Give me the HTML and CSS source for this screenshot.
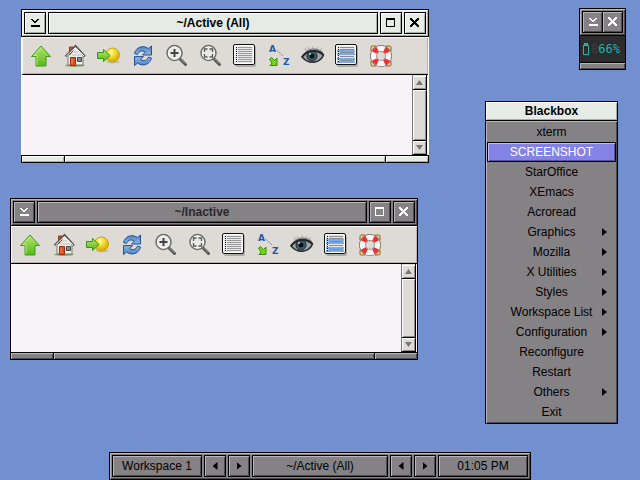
FILE: index.html
```html
<!DOCTYPE html>
<html lang="en">
<head>
<meta charset="utf-8">
<title>Blackbox</title>
<link rel="stylesheet" href="styles.css">
</head>
<body>
<svg class="sprites" aria-hidden="true">
  <defs>
    <linearGradient id="green" x2="0" y2="1"><stop stop-color="#b4e86a"/><stop offset="1" stop-color="#58b81c"/></linearGradient>
    <linearGradient id="blue" x2="0" y2="1"><stop stop-color="#4d83c4"/><stop offset="1" stop-color="#8fb5e2"/></linearGradient>
    <radialGradient id="gold" cx=".4" cy=".3" r=".7"><stop stop-color="#fffbb0"/><stop offset=".4" stop-color="#f5e030"/><stop offset="1" stop-color="#d3a80a"/></radialGradient>
    <symbol id="up" viewBox="0 0 24 24">
      <path d="M12 2 21.5 12.5H17V22H7V12.5H2.500Z" fill="url(#green)" stroke="#3f9c1c" stroke-linejoin="round"/>
      <path d="M12 4 5 11.500H8V21" fill="none" stroke="#d8f5a8" opacity=".7"/>
    </symbol>
    <symbol id="home" viewBox="0 0 24 24">
      <ellipse cx="12" cy="21.500" rx="10" ry="1.500" fill="#88a860"/>
      <path d="M5 12V21H20V11L12.500 3Z" fill="#eeeeec" stroke="#777"/>
      <path d="M6.500 3H10V7L6.500 11Z" fill="#d4582c" stroke="#95330e"/>
      <path d="M2.500 12.500 12.500 2 22 12.500" fill="none" stroke="#555753" stroke-width="2"/>
      <path d="M3.500 12 12.500 3.500 21 12" fill="none" stroke="#fff"/>
      <path d="M9 11H18M11 8H15" stroke="#bbb"/>
      <path d="M7.500 13.500H12.500V21.500H7.500Z" fill="#e0512b" stroke="#9d2b0c"/>
      <path d="M9 15V20" stroke="#f88a55"/>
      <path d="M14.500 13.500H18.500V17.500H14.500Z" fill="#888a85" stroke="#444"/>
    </symbol>
    <symbol id="go" viewBox="0 0 24 24">
      <ellipse cx="16" cy="18" rx="7" ry="1.500" fill="#aaa69d" opacity=".5"/>
      <circle cx="15.500" cy="11" r="7" fill="url(#gold)" stroke="#c9a20c"/>
      <path d="M.500 8.500H6.500V5.500L13 11.500 6.500 17.500V14.500H.500Z" fill="url(#green)" stroke="#3f8f18" stroke-linejoin="round"/>
    </symbol>
    <symbol id="reload" viewBox="0 0 24 24">
      <path id="swirl" d="M3.500 9.500C5 3.500 11.500 .500 17.500 4.500L20.500 2V11H11.500L14.500 8C11 6 8 7 6.500 10.500Z" fill="url(#blue)" stroke="#24508f" stroke-linejoin="round"/>
      <use href="#swirl" transform="rotate(180 12 11.800)"/>
    </symbol>
    <symbol id="lens" viewBox="0 0 24 24">
      <path d="M15 15 20.500 20.500" stroke="#555753" stroke-width="3" stroke-linecap="round"/>
      <path d="M15.500 15 20 19.500" stroke="#999" stroke-width="1"/>
      <circle cx="9.500" cy="9" r="7.500" fill="#e9e9e6" stroke="#6c6f69" stroke-width="1.500"/>
      <circle cx="9.500" cy="9" r="6" fill="none" stroke="#fafafa"/>
    </symbol>
    <symbol id="zoom-in" viewBox="0 0 24 24">
      <use href="#lens"/><path d="M9.500 5V13M5.500 9H13.500" stroke="#444" stroke-width="2"/>
    </symbol>
    <symbol id="zoom-fit" viewBox="0 0 24 24">
      <use href="#lens"/><path d="M5.500 8V5H8.500M10.500 5H13.500V8M13.500 10V13H10.500M8.500 13H5.500V10" fill="none" stroke="#555" stroke-width="1.300"/>
    </symbol>
    <symbol id="sheet" viewBox="0 0 24 24">
      <rect x="2" y="2" width="21" height="21" rx="2" fill="#77736c" opacity=".45"/>
      <rect x=".500" y=".500" width="21" height="20" rx="1.500" fill="#fff" stroke="#111"/>
      <rect x="2" y="2" width="18" height="17" fill="#e8e8e8"/>
    </symbol>
    <symbol id="list" viewBox="0 0 24 24">
      <use href="#sheet"/>
      <path d="M5 3.500H19M5 5.500H19M5 7.500H19M5 9.500H19M5 11.500H19M5 13.500H19M5 15.500H19M5 17.500H19" stroke="#999"/>
      <path d="M3.500 3V18.500" stroke="#111" stroke-dasharray="1 1"/>
    </symbol>
    <symbol id="details" viewBox="0 0 24 24">
      <use href="#sheet"/>
      <path d="M2 7H20M2 10H20M2 15H20M2 18H20" stroke="#78aae8" stroke-width="2"/>
      <path d="M5 3.500H19M5 5.500H19M5 8.500H19M5 12.500H19M5 16.500H19" stroke="#8b8b8b"/>
      <path d="M3.500 3V19" stroke="#111" stroke-dasharray="1 1"/>
    </symbol>
    <symbol id="sort" viewBox="0 0 24 24">
      <text x="2" y="8" class="sort-letter">A</text>
      <text x="16" y="21" class="sort-letter">Z</text>
      <path d="M10 6.500 16 12" stroke="#1e4f95" stroke-dasharray="1 1.500"/>
      <path d="M2.500 15 4.500 13.500 7.500 16.500 10 14V21.500H3L5 19Z" fill="#76d51b" stroke="#3c8c0b"/>
    </symbol>
    <symbol id="eye" viewBox="0 0 24 24">
      <path d="M4 8C8 3 17 3 22 8L21 11Q12 4 3 11Z" fill="#686868" opacity=".7"/>
      <path d="M5 7 4 4M8 5.500 7 3M12 4.500V2M16 5 17 3M19 6.500 21 4" stroke="#999" stroke-width=".700"/>
      <path d="M1 13C6 5 17 5 22.500 11C20 18 9 22 1 13Z" fill="#9ea2a0" stroke="#292d2f" stroke-width="1.500"/>
      <circle cx="11" cy="12" r="5" fill="#3b6170" stroke="#1b282d"/>
      <circle cx="11" cy="12" r="2.500" fill="#081014"/>
      <circle cx="9" cy="10" r="1" fill="#c4dce4"/>
      <path d="M1 13C6 6 16 5 22.500 11" fill="none" stroke="#22282b" stroke-width="2"/>
    </symbol>
    <symbol id="help" viewBox="0 0 24 24">
      <path d="M2 7V4Q2 2 4 2H7M17 2H20Q22 2 22 4V7M22 17V20Q22 22 20 22H17M7 22H4Q2 22 2 20V17" fill="none" stroke="#b78a3e" stroke-width="1.500"/>
      <circle cx="12" cy="12" r="7.500" fill="none" stroke="#77736c" stroke-width="7"/>
      <circle cx="12" cy="12" r="7.500" fill="none" stroke="#f5f5f3" stroke-width="5.500"/>
      <circle cx="12" cy="12" r="7.500" fill="none" stroke="#ef3030" stroke-width="5.500" pathLength="80" stroke-dasharray="8 12" stroke-dashoffset="-6"/>
    </symbol>
    <symbol id="shade" viewBox="0 0 10 10"><path d="M1 1H3V2H4V3H6V2H7V1H9V2H8V3H7V4H6V5H4V4H3V3H2V2H1ZM1 7H10V9H1Z"/></symbol>
    <symbol id="max" viewBox="0 0 10 10"><path fill-rule="evenodd" d="M0 0H9V9H0ZM1 2V8H8V2Z"/></symbol>
    <symbol id="close" viewBox="0 0 10 10"><path d="M0 0H2V1H3V2H4V3H5V2H6V1H7V0H9V2H8V3H7V4H6V5H7V6H8V7H9V9H7V8H6V7H5V6H4V7H3V8H2V9H0V7H1V6H2V5H3V4H2V3H1V2H0Z"/></symbol>
  </defs>
</svg>

<main class="desktop">
  <section class="window window-active" aria-label="Active window">
    <header class="titlebar">
      <button class="bevel control" aria-label="Shade"><svg><use href="#shade"/></svg></button>
      <h2 class="bevel caption">~/Active (All)</h2>
      <button class="bevel control" aria-label="Maximize"><svg><use href="#max"/></svg></button>
      <button class="bevel control" aria-label="Close"><svg><use href="#close"/></svg></button>
    </header>
    <nav class="tools">
      <button aria-label="Up"><svg><use href="#up"/></svg></button>
      <button aria-label="Home"><svg><use href="#home"/></svg></button>
      <button aria-label="Go"><svg><use href="#go"/></svg></button>
      <button aria-label="Reload"><svg><use href="#reload"/></svg></button>
      <button aria-label="Zoom in"><svg><use href="#zoom-in"/></svg></button>
      <button aria-label="Zoom to fit"><svg><use href="#zoom-fit"/></svg></button>
      <button aria-label="List"><svg><use href="#list"/></svg></button>
      <button aria-label="Sort"><svg><use href="#sort"/></svg></button>
      <button aria-label="Hidden files"><svg><use href="#eye"/></svg></button>
      <button aria-label="Details"><svg><use href="#details"/></svg></button>
      <button aria-label="Help"><svg><use href="#help"/></svg></button>
    </nav>
    <div class="client">
      <div class="scrollbar">
        <button class="step" aria-label="Scroll up"><i class="tri-up"></i></button>
        <div class="thumb"></div>
        <button class="step" aria-label="Scroll down"><i class="tri-down"></i></button>
      </div>
    </div>
    <footer class="handle"><i class="grip"></i><i class="bar"></i><i class="grip"></i></footer>
  </section>

  <section class="window window-inactive" aria-label="Inactive window">
    <header class="titlebar">
      <button class="bevel control" aria-label="Shade"><svg><use href="#shade"/></svg></button>
      <h2 class="bevel caption">~/Inactive</h2>
      <button class="bevel control" aria-label="Maximize"><svg><use href="#max"/></svg></button>
      <button class="bevel control" aria-label="Close"><svg><use href="#close"/></svg></button>
    </header>
    <nav class="tools">
      <button aria-label="Up"><svg><use href="#up"/></svg></button>
      <button aria-label="Home"><svg><use href="#home"/></svg></button>
      <button aria-label="Go"><svg><use href="#go"/></svg></button>
      <button aria-label="Reload"><svg><use href="#reload"/></svg></button>
      <button aria-label="Zoom in"><svg><use href="#zoom-in"/></svg></button>
      <button aria-label="Zoom to fit"><svg><use href="#zoom-fit"/></svg></button>
      <button aria-label="List"><svg><use href="#list"/></svg></button>
      <button aria-label="Sort"><svg><use href="#sort"/></svg></button>
      <button aria-label="Hidden files"><svg><use href="#eye"/></svg></button>
      <button aria-label="Details"><svg><use href="#details"/></svg></button>
      <button aria-label="Help"><svg><use href="#help"/></svg></button>
    </nav>
    <div class="client">
      <div class="scrollbar">
        <button class="step" aria-label="Scroll up"><i class="tri-up"></i></button>
        <div class="thumb"></div>
        <button class="step" aria-label="Scroll down"><i class="tri-down"></i></button>
      </div>
    </div>
    <footer class="handle"><i class="grip"></i><i class="bar"></i><i class="grip"></i></footer>
  </section>

  <section class="window window-inactive battery" aria-label="Battery">
    <header class="titlebar">
      <button class="bevel control" aria-label="Shade"><svg><use href="#shade"/></svg></button>
      <button class="bevel control" aria-label="Close"><svg><use href="#close"/></svg></button>
    </header>
    <div class="lcd">
      <svg viewBox="0 0 6 12" aria-hidden="true"><path fill-rule="evenodd" d="M1 0H5V2H6V12H0V2H1ZM1 3V11H5V3Z" fill="#20b2ae"/></svg>
      <span class="reading"><span class="ghost" aria-hidden="true">8</span>66%</span>
    </div>
    <footer class="handle"><i class="bar"></i></footer>
  </section>

  <nav class="menu">
    <h2 class="menu-title">Blackbox</h2>
    <ul>
      <li><button>xterm</button></li>
      <li><button class="selected">SCREENSHOT</button></li>
      <li><button>StarOffice</button></li>
      <li><button>XEmacs</button></li>
      <li><button>Acroread</button></li>
      <li><button class="sub">Graphics</button></li>
      <li><button class="sub">Mozilla</button></li>
      <li><button class="sub">X Utilities</button></li>
      <li><button class="sub">Styles</button></li>
      <li><button class="sub">Workspace List</button></li>
      <li><button class="sub">Configuration</button></li>
      <li><button>Reconfigure</button></li>
      <li><button>Restart</button></li>
      <li><button class="sub">Others</button></li>
      <li><button>Exit</button></li>
    </ul>
  </nav>

  <footer class="panel">
    <span class="bevel cell">Workspace 1</span>
    <button class="bevel control" aria-label="Previous workspace"><i class="tri-left"></i></button>
    <button class="bevel control" aria-label="Next workspace"><i class="tri-right"></i></button>
    <span class="bevel cell cell-wide">~/Active (All)</span>
    <button class="bevel control" aria-label="Previous window"><i class="tri-left"></i></button>
    <button class="bevel control" aria-label="Next window"><i class="tri-right"></i></button>
    <time class="bevel cell">01:05 PM</time>
  </footer>
</main>
</body>
</html>
```

FILE: styles.css
```css
* { box-sizing: border-box; }

body {
  margin: 0;
  font: 12px/18px "Liberation Sans", Arial, sans-serif;
  color: #000;
}

button {
  margin: 0;
  padding: 0;
  border: 0;
  background: none;
  font: inherit;
  color: inherit;
}

h2 { margin: 0; font-size: 12px; line-height: 18px; }

.sprites { position: absolute; width: 0; height: 0; }

.desktop {
  position: relative;
  min-height: 100vh;
  overflow: hidden;
  background: #728fd0;
  --face: #858285;
  --light: #b9b6b9;
  --dark: #4c4a4c;
}

.bevel {
  border: 1px solid #000;
  background: var(--face);
  box-shadow: inset 1px 1px var(--light), inset -1px -1px var(--dark);
}

.control {
  display: flex;
  flex: none;
  align-items: center;
  justify-content: center;
  width: 22px;
  height: 22px;
}
.control svg { width: 10px; height: 10px; fill: currentColor; }

/* Windows */
.window {
  position: absolute;
  display: flex;
  flex-direction: column;
  width: 408px;
}
.window-active {
  left: 21px;
  top: 9px;
  height: 154px;
  --face: #e6ebe6;
  --light: #fff;
  --dark: #a8aca8;
  --side: #fff;
}
.window-inactive {
  left: 10px;
  top: 198px;
  height: 162px;
  --side: #000;
}

.titlebar {
  display: flex;
  gap: 2px;
  padding: 2px;
  border: 1px solid #000;
  background: var(--face);
  box-shadow: inset 1px 1px var(--light), inset -1px -1px var(--dark);
}
.caption {
  flex: 1;
  height: 22px;
  line-height: 20px;
  text-align: center;
}
.window-inactive .caption { color: #2a282a; }
.window-inactive .control { color: #fff; }

.tools {
  display: flex;
  gap: 10px;
  padding: 7px 7px 6px;
  border: solid var(--side);
  border-width: 0 1px;
  background: #dedbd6;
  box-shadow: inset 1px 1px #f8f6f2, inset -1px -1px #b5b2ad;
}
.tools button, .tools svg { display: block; width: 24px; height: 24px; }
.sort-letter { font: bold 9px "DejaVu Sans", sans-serif; fill: #1e5aa8; }

.client {
  display: flex;
  flex: 1;
  justify-content: flex-end;
  padding-right: 1px;
  border: solid var(--side);
  border-width: 0 1px;
  background: linear-gradient(#000 0 1px, #f7f3f7 1px);
}
.scrollbar {
  display: flex;
  flex-direction: column;
  width: 15px;
  margin-top: 1px;
  padding-top: 1px;
  border: solid #000;
  border-width: 0 1px 1px;
  border-left-color: #77757a;
  background: #dedbd6;
}
.step {
  display: flex;
  align-items: center;
  justify-content: center;
  height: 13px;
  box-shadow: inset 1px 1px #fff, inset -1px -1px #8c8a86;
}
.thumb {
  flex: 1;
  border: solid #000;
  border-width: 1px 0;
  box-shadow: inset 1px 1px #fff, inset -1px -1px #8c8a86;
}
.tri-up, .tri-down {
  width: 7px;
  height: 5px;
  background: #77757a;
  clip-path: polygon(50% 0, 100% 100%, 0 100%);
}
.tri-down { clip-path: polygon(0 0, 100% 0, 50% 100%); }

.handle {
  display: flex;
  gap: 1px;
  height: 8px;
  padding: 1px;
  background: #000;
}
.handle i {
  background: var(--face);
  box-shadow: inset 1px 1px var(--light), inset -1px -1px var(--dark);
}
.grip { width: 42px; }
.bar { flex: 1; }

/* Battery monitor */
.battery {
  left: auto;
  right: 14px;
  top: 8px;
  width: 47px;
  height: 62px;
}
.battery .titlebar { gap: 0; }
.battery .control { flex: 1; }
.battery .control + .control { border-left: 0; }
.lcd {
  display: flex;
  flex: 1;
  align-items: center;
  gap: 2px;
  padding: 0 3px;
  border: solid #000;
  border-width: 0 1px;
  background: #2c2c2c;
}
.lcd svg { flex: none; width: 6px; height: 12px; }
.reading { font: 12px/12px "DejaVu Sans Mono", monospace; color: #20b2ae; }
.ghost { color: #3f3f3f; }

/* Root menu */
.menu {
  position: absolute;
  top: 101px;
  right: 22px;
  width: 133px;
  border: 1px solid #000;
  background: var(--face);
}
.menu-title {
  height: 19px;
  border-bottom: 1px solid #000;
  background: #e6ebe6;
  box-shadow: inset 1px 1px #fff, inset -1px -1px #a8aca8;
  text-align: center;
}
.menu ul {
  margin: 0;
  padding: 1px;
  list-style: none;
  box-shadow: inset 1px 1px var(--light), inset -1px -1px var(--dark);
}
.menu button {
  position: relative;
  display: block;
  width: 100%;
  height: 20px;
  border: 1px solid transparent;
  line-height: 18px;
  text-align: center;
}
.menu .selected {
  border-color: #000;
  background: #8582e6;
  box-shadow: inset 1px 1px #bdbaff, inset -1px -1px #5553a0;
  color: #fff;
}
.sub::after {
  content: "";
  position: absolute;
  top: 5px;
  right: 8px;
  width: 5px;
  height: 8px;
  background: #000;
  clip-path: polygon(0 0, 100% 50%, 0 100%);
}

/* Desktop toolbar */
.panel {
  position: absolute;
  bottom: 0;
  left: 109px;
  right: 109px;
  display: flex;
  gap: 2px;
  padding: 2px;
  border: 1px solid #000;
  background: var(--face);
  box-shadow: inset 1px 1px var(--light), inset -1px -1px var(--dark);
}
.cell {
  width: 90px;
  height: 22px;
  line-height: 20px;
  text-align: center;
  white-space: nowrap;
}
.cell-wide { flex: 1; }
.tri-left, .tri-right {
  width: 5px;
  height: 8px;
  background: #000;
  clip-path: polygon(100% 0, 100% 100%, 0 50%);
}
.tri-right { clip-path: polygon(0 0, 100% 50%, 0 100%); }
```
